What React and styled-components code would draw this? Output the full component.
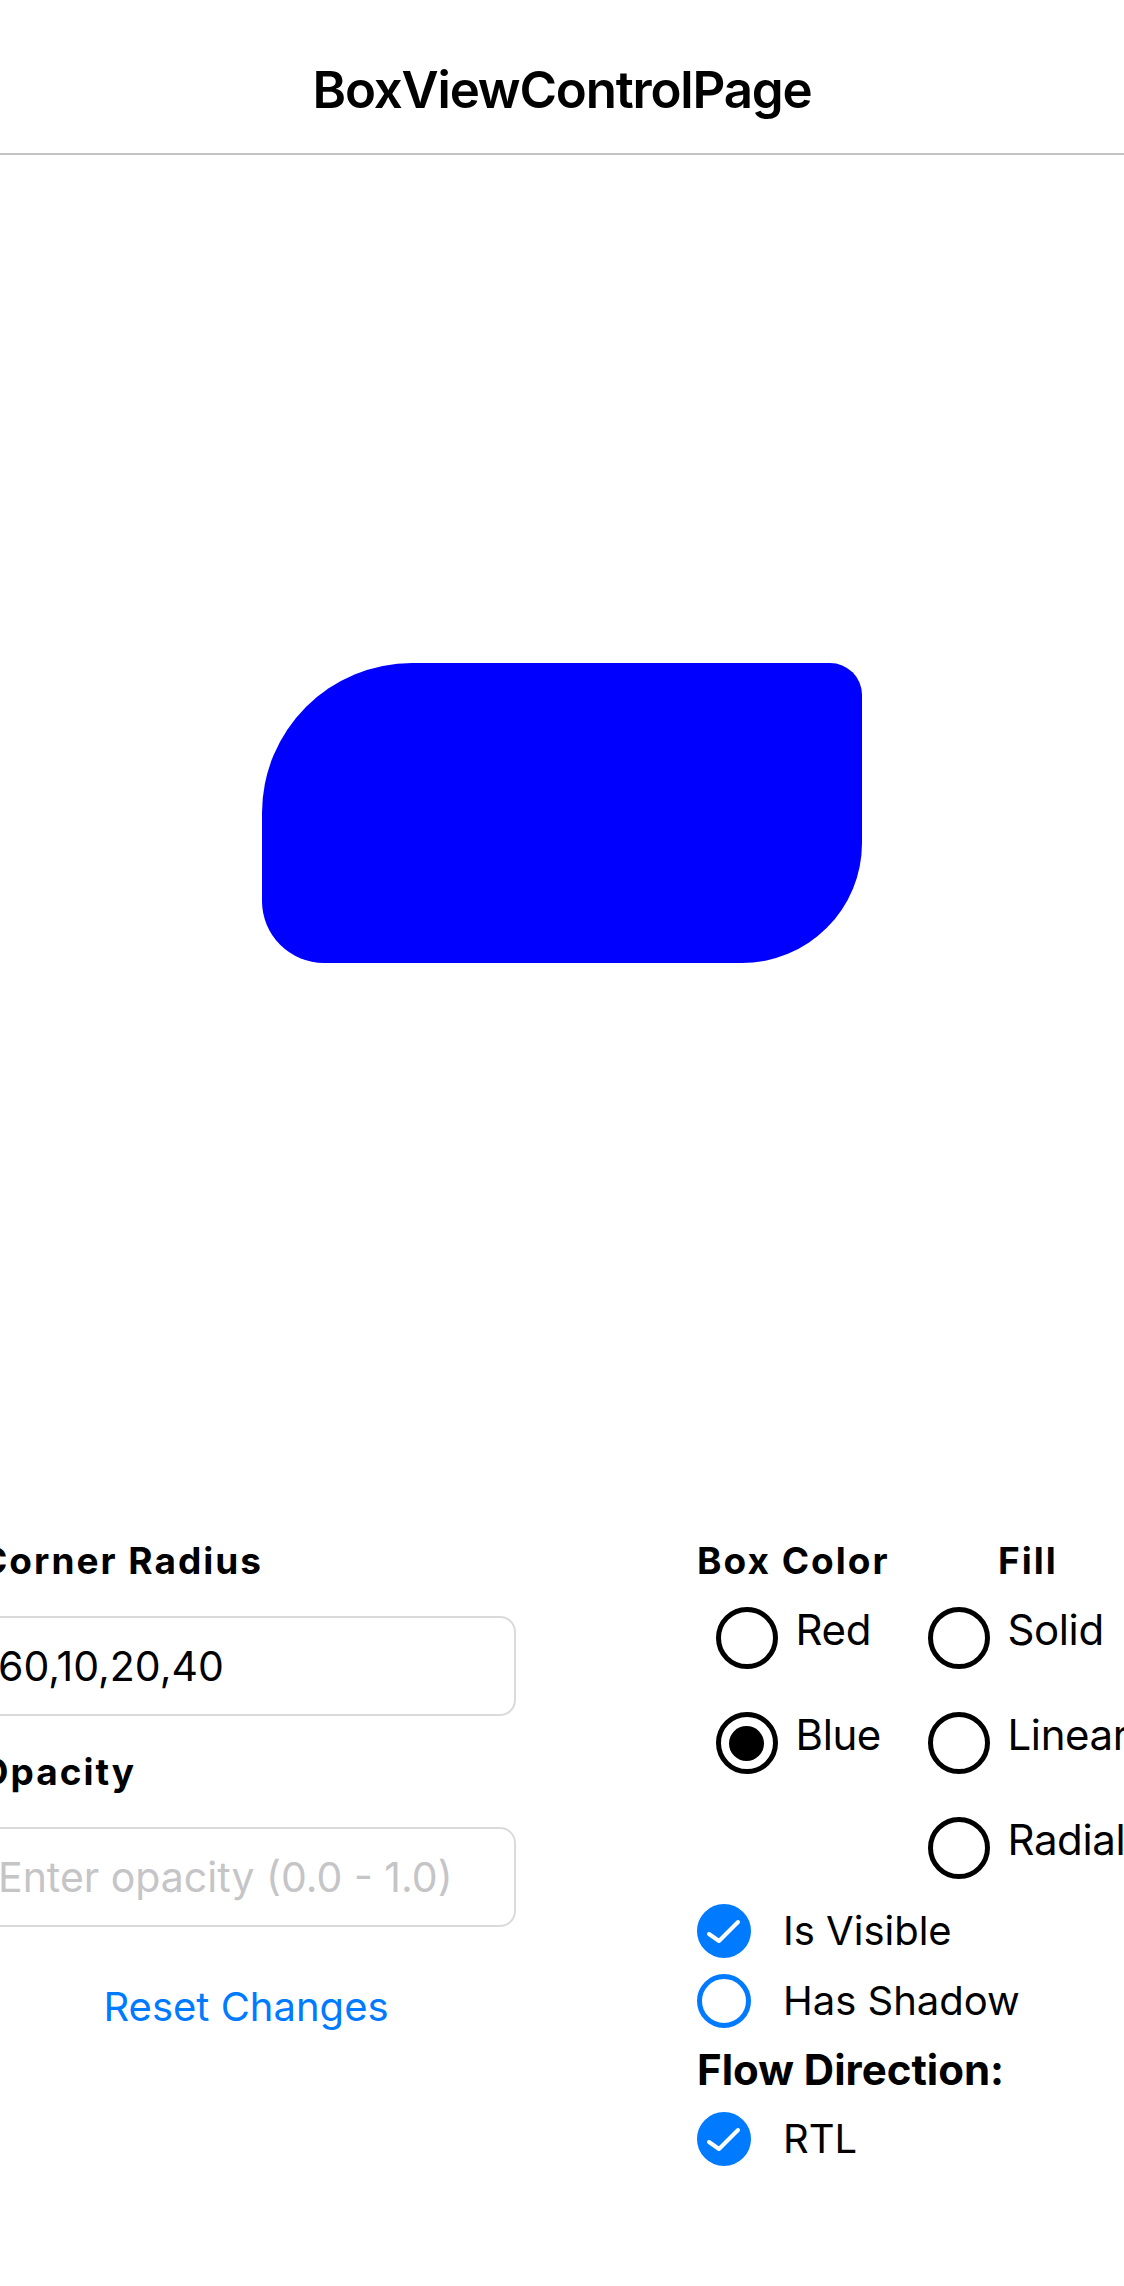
import { useState } from "react";
import styled, { createGlobalStyle } from "styled-components";

const GlobalStyle = createGlobalStyle`
  body {
    margin: 0;
    background: #ffffff;
    font-family: Inter, "Liberation Sans", sans-serif;
    color: #000000;
    overflow-x: hidden;
  }
  * {
    box-sizing: border-box;
  }
`;

const Page = styled.div`
  width: 1124px;
  height: 2286px;
  overflow: hidden;
  display: flex;
  flex-direction: column;
`;

const Header = styled.header`
  height: 155px;
  flex-shrink: 0;
  display: flex;
  justify-content: center;
  padding-top: 64px;
  border-bottom: 2px solid #c4c4c6;
`;

const Title = styled.h1`
  margin: 0;
  font-size: 51px;
  line-height: 1;
  font-weight: 600;
  letter-spacing: -1.2px;
`;

const Stage = styled.div`
  height: 1316px;
  flex-shrink: 0;
  display: flex;
  align-items: center;
  justify-content: center;
`;

const Box = styled.div`
  width: 600px;
  height: 300px;
  background: ${(props) => props.color};
  opacity: ${(props) => (props.visible ? 1 : 0)};
  border-radius: 150px 32px 120px 62px;
  box-shadow: ${(props) => (props.shadow ? "0 10px 30px rgba(0,0,0,0.4)" : "none")};
`;

const Controls = styled.div`
  display: flex;
  padding-top: 71px;
`;

const LeftCol = styled.div`
  width: 540px;
  margin-left: -24px;
  display: flex;
  flex-direction: column;
`;

const FieldLabel = styled.div`
  font-size: 37px;
  line-height: 1;
  font-weight: 700;
  letter-spacing: 2px;
  padding-left: 4px;
  white-space: nowrap;
  margin-top: ${(props) => props.top || "0"};
`;

const Entry = styled.input`
  width: 540px;
  height: 100px;
  margin-top: 37px;
  border: 2px solid #dadada;
  border-radius: 16px;
  padding: 0 0 0 20px;
  font-family: inherit;
  font-size: 41px;
  color: #000000;
  outline: none;
  &::placeholder {
    color: #c5c5c7;
  }
`;

const ResetButton = styled.button`
  margin-top: 60px;
  align-self: center;
  background: none;
  border: none;
  padding: 0;
  font-family: inherit;
  font-size: 40px;
  line-height: 1;
  color: #007aff;
  cursor: pointer;
`;

const RightCol = styled.div`
  margin-left: 181px;
  display: flex;
  flex-direction: column;
`;

const GroupRow = styled.div`
  display: flex;
  gap: 38px;
`;

const Group = styled.div`
  display: flex;
  flex-direction: column;
  align-items: center;
`;

const GroupTitle = styled.div`
  font-size: 37px;
  line-height: 1;
  font-weight: 700;
  letter-spacing: 2px;
  white-space: nowrap;
`;

const RadioList = styled.div`
  display: flex;
  flex-direction: column;
  gap: 43px;
  margin-top: 28px;
  padding-left: ${(props) => props.shift || "0"};
`;

const RadioItem = styled.label`
  display: flex;
  align-items: center;
  gap: 18px;
  cursor: pointer;
  white-space: nowrap;
`;

const RadioCircle = styled.span`
  width: 62px;
  height: 62px;
  border-radius: 50%;
  border: 5px solid #000000;
  display: flex;
  align-items: center;
  justify-content: center;
  flex-shrink: 0;
  &::after {
    content: "";
    width: 35px;
    height: 35px;
    border-radius: 50%;
    background: #000000;
    display: ${(props) => (props.checked ? "block" : "none")};
  }
`;

const ItemText = styled.span`
  font-size: 42px;
  line-height: 1;
  letter-spacing: -0.4px;
  margin-top: -16px;
`;

const CheckList = styled.div`
  display: flex;
  flex-direction: column;
  margin-top: 25px;
`;

const CheckItem = styled.label`
  display: flex;
  align-items: center;
  gap: 32px;
  margin-top: ${(props) => props.top || "0"};
  cursor: pointer;
`;

const CheckCircle = styled.span`
  width: 54px;
  height: 54px;
  border-radius: 50%;
  border: 5px solid #007aff;
  background: ${(props) => (props.checked ? "#007aff" : "transparent")};
  display: flex;
  align-items: center;
  justify-content: center;
  flex-shrink: 0;
`;

const CheckText = styled.span`
  font-size: 40px;
  line-height: 1;
`;

const SectionTitle = styled.div`
  font-size: 42px;
  line-height: 1;
  font-weight: 700;
  margin-top: 21px;
  margin-bottom: 21px;
`;

const CheckMark = () => (
  <svg width="44" height="44" viewBox="0 0 44 44" fill="none">
    <path
      d="M7 25 L17 32 L36 13"
      stroke="#ffffff"
      strokeWidth="4"
      strokeLinecap="round"
      strokeLinejoin="round"
    />
  </svg>
);

const Radio = ({ label, checked, onSelect }) => (
  <RadioItem onClick={onSelect}>
    <RadioCircle checked={checked} />
    <ItemText>{label}</ItemText>
  </RadioItem>
);

const Check = ({ label, checked, onToggle, top }) => (
  <CheckItem top={top} onClick={onToggle}>
    <CheckCircle checked={checked}>{checked && <CheckMark />}</CheckCircle>
    <CheckText>{label}</CheckText>
  </CheckItem>
);

export default function App() {
  const [color, setColor] = useState("Blue");
  const [fill, setFill] = useState("");
  const [visible, setVisible] = useState(true);
  const [shadow, setShadow] = useState(false);
  const [rtl, setRtl] = useState(true);
  const [radius, setRadius] = useState("60,10,20,40");
  const [opacity, setOpacity] = useState("");

  const reset = () => {
    setColor("Blue");
    setFill("");
    setVisible(true);
    setShadow(false);
    setRadius("60,10,20,40");
    setOpacity("");
  };

  return (
    <>
      <GlobalStyle />
      <Page>
        <Header>
          <Title>BoxViewControlPage</Title>
        </Header>
        <Stage>
          <Box
            color={color === "Red" ? "#ff0000" : "#0000ff"}
            visible={visible}
            shadow={shadow}
          />
        </Stage>
        <Controls>
          <LeftCol>
            <FieldLabel>Corner Radius</FieldLabel>
            <Entry value={radius} onChange={(e) => setRadius(e.target.value)} />
            <FieldLabel top="37px">Opacity</FieldLabel>
            <Entry
              placeholder="Enter opacity (0.0 - 1.0)"
              value={opacity}
              onChange={(e) => setOpacity(e.target.value)}
            />
            <ResetButton onClick={reset}>Reset Changes</ResetButton>
          </LeftCol>
          <RightCol>
            <GroupRow>
              <Group>
                <GroupTitle>Box Color</GroupTitle>
                <RadioList shift="10px">
                  {["Red", "Blue"].map((c) => (
                    <Radio key={c} label={c} checked={color === c} onSelect={() => setColor(c)} />
                  ))}
                </RadioList>
              </Group>
              <Group>
                <GroupTitle>Fill</GroupTitle>
                <RadioList>
                  {["Solid", "Linear", "Radial"].map((f) => (
                    <Radio key={f} label={f} checked={fill === f} onSelect={() => setFill(f)} />
                  ))}
                </RadioList>
              </Group>
            </GroupRow>
            <CheckList>
              <Check label="Is Visible" checked={visible} onToggle={() => setVisible(!visible)} />
              <Check
                label="Has Shadow"
                checked={shadow}
                onToggle={() => setShadow(!shadow)}
                top="16px"
              />
              <SectionTitle>Flow Direction:</SectionTitle>
              <Check label="RTL" checked={rtl} onToggle={() => setRtl(!rtl)} />
            </CheckList>
          </RightCol>
        </Controls>
      </Page>
    </>
  );
}
